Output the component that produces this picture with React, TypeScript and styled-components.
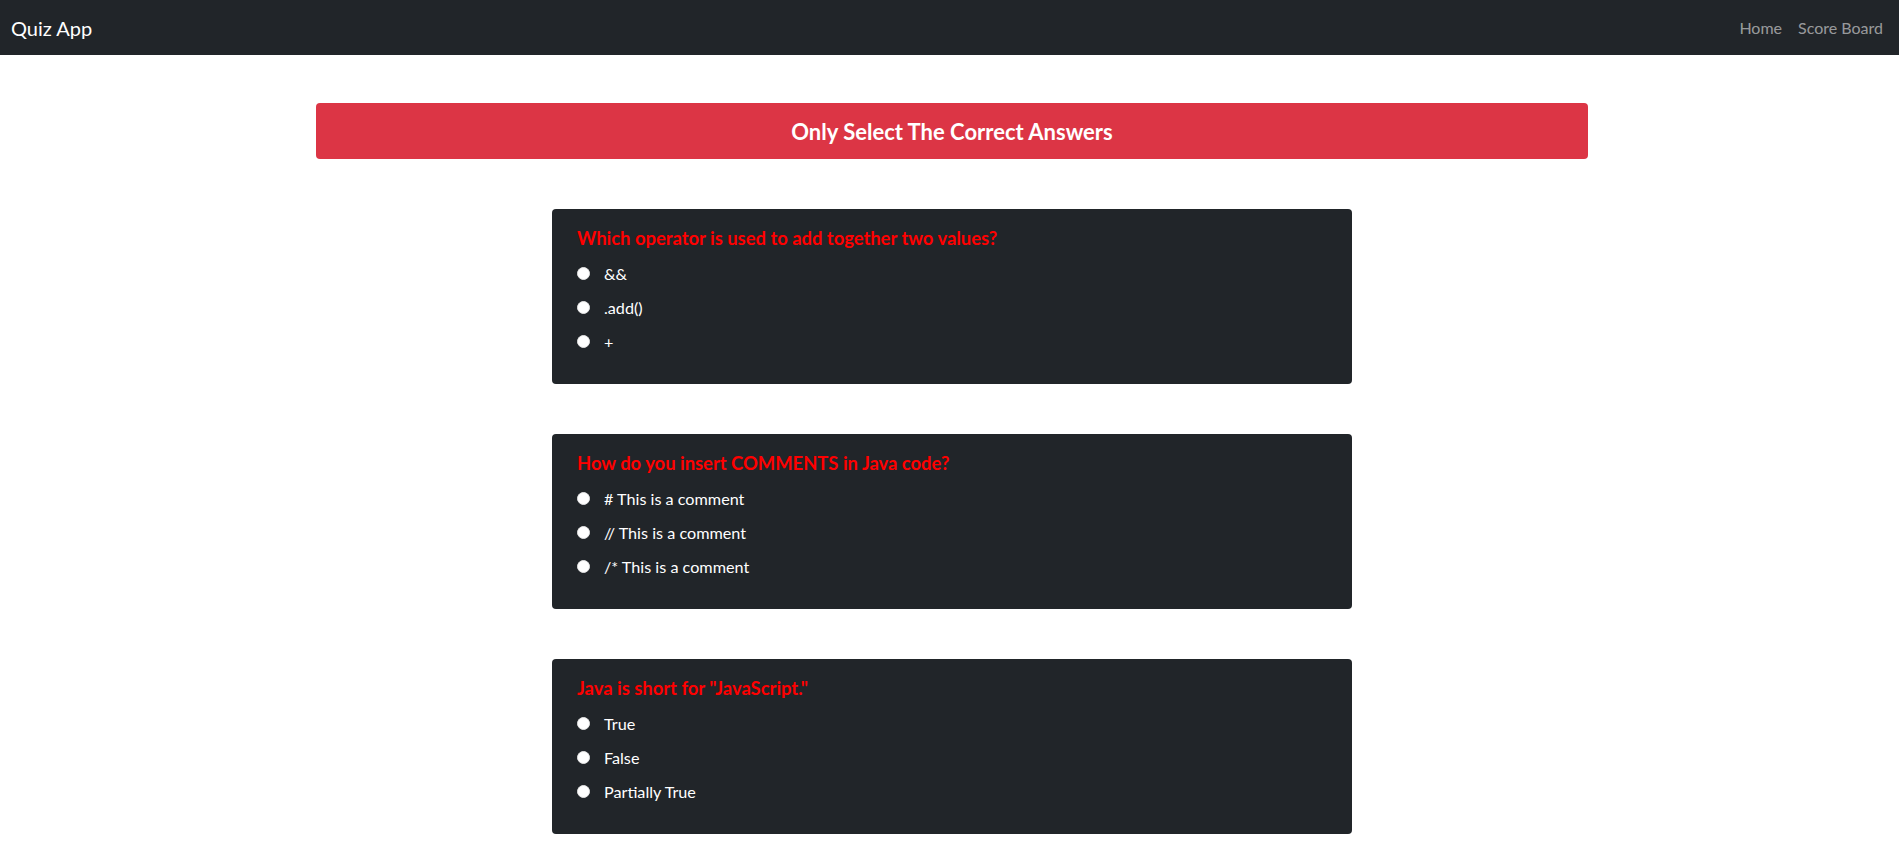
import React from "react";
import styled, { createGlobalStyle } from "styled-components";

type Question = {
  id: string;
  text: string;
  options: string[];
};

const questions: Question[] = [
  {
    id: "q1",
    text: "Which operator is used to add together two values?",
    options: ["&&", ".add()", "+"],
  },
  {
    id: "q2",
    text: "How do you insert COMMENTS in Java code?",
    options: ["# This is a comment", "// This is a comment", "/* This is a comment"],
  },
  {
    id: "q3",
    text: 'Java is short for "JavaScript."',
    options: ["True", "False", "Partially True"],
  },
];

const GlobalStyle = createGlobalStyle`
  * {
    box-sizing: border-box;
  }

  body {
    margin: 0;
    background: #fff;
    font-family: Lato, "Liberation Sans", sans-serif;
  }
`;

const Navbar = styled.nav`
  height: 55px;
  background: #212529;
  display: flex;
  align-items: center;
  justify-content: space-between;
  padding: 0 8px 0 11px;
`;

const Brand = styled.a`
  font-size: 20px;
  color: #fff;
  text-decoration: none;
  line-height: 30px;
`;

const NavLinks = styled.div`
  display: flex;
`;

const NavLink = styled.a`
  font-size: 16px;
  color: rgba(255, 255, 255, 0.55);
  text-decoration: none;
  padding: 8px;
  line-height: 24px;
`;

const Main = styled.main`
  display: flex;
  flex-direction: column;
  align-items: center;
  padding: 48px 0 28px 5px;
`;

const Banner = styled.h2`
  width: 1272px;
  height: 56px;
  margin: 0;
  background: #dc3545;
  border-radius: 4px;
  color: #fff;
  font-size: 22px;
  font-weight: 700;
  display: flex;
  align-items: center;
  justify-content: center;
`;

const QuestionList = styled.div`
  display: flex;
  flex-direction: column;
  gap: 50px;
  margin-top: 50px;
`;

const Card = styled.form`
  width: 800px;
  height: 175px;
  background: #212529;
  border-radius: 4px;
  padding: 16px 24px 26px 25px;
`;

const Title = styled.h5`
  margin: 0 0 4px;
  color: #ff0000;
  font-size: 18.4px;
  font-weight: 700;
  line-height: 27px;
`;

const Option = styled.label`
  height: 34px;
  display: flex;
  align-items: center;
  gap: 14px;
  color: #fff;
  font-size: 16.2px;
  cursor: pointer;
`;

const Radio = styled.input`
  appearance: none;
  width: 13px;
  height: 13px;
  margin: 0;
  border-radius: 50%;
  background: #fff;
  border: 1px solid #e6e6e6;
  flex-shrink: 0;

  &:checked {
    border: 4px solid #0d6efd;
  }
`;

const QuestionCard: React.FC<{ question: Question }> = ({ question }) => (
  <Card>
    <Title>{question.text}</Title>
    {question.options.map((option) => (
      <Option key={option}>
        <Radio type="radio" name={question.id} value={option} />
        {option}
      </Option>
    ))}
  </Card>
);

export default function App() {
  return (
    <>
      <GlobalStyle />
      <Navbar>
        <Brand href="#">Quiz App</Brand>
        <NavLinks>
          <NavLink href="#">Home</NavLink>
          <NavLink href="#">Score Board</NavLink>
        </NavLinks>
      </Navbar>
      <Main>
        <Banner>Only Select The Correct Answers</Banner>
        <QuestionList>
          {questions.map((q) => (
            <QuestionCard key={q.id} question={q} />
          ))}
        </QuestionList>
      </Main>
    </>
  );
}
